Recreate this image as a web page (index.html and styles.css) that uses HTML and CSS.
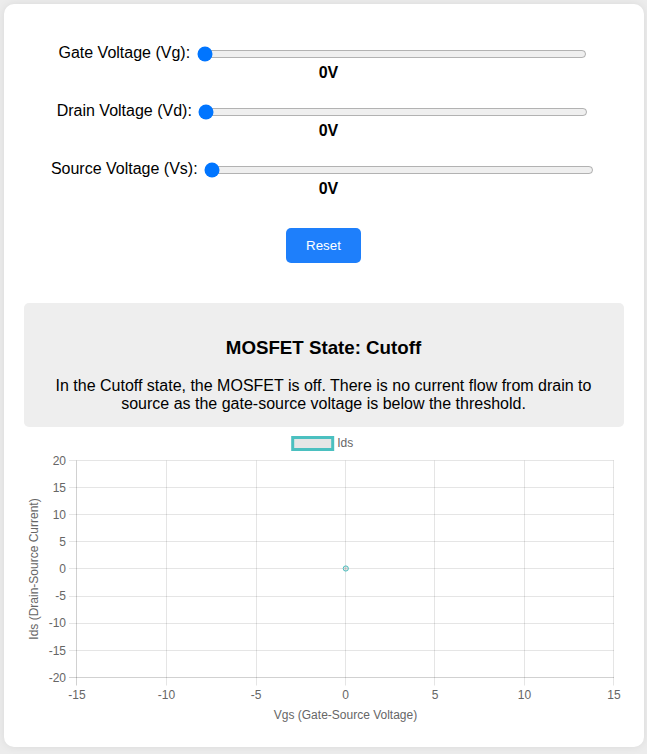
FILE: index.html
```html
<!DOCTYPE html>
<html lang="en">
<head>
<meta charset="UTF-8">
<title>MOSFET Simulator</title>
<link rel="stylesheet" href="styles.css">
</head>
<body>
<div class="container">
  <div class="control">
    <label for="vg">Gate Voltage (Vg):</label>
    <input type="range" id="vg" min="0" max="10" step="0.1" value="0">
    <div class="value">0V</div>
  </div>
  <div class="control">
    <label for="vd">Drain Voltage (Vd):</label>
    <input type="range" id="vd" min="0" max="10" step="0.1" value="0">
    <div class="value">0V</div>
  </div>
  <div class="control">
    <label for="vs">Source Voltage (Vs):</label>
    <input type="range" id="vs" min="0" max="10" step="0.1" value="0">
    <div class="value">0V</div>
  </div>
  <div class="actions"><button class="reset" type="button">Reset</button></div>
  <div class="info">
    <h3>MOSFET State: Cutoff</h3>
    <p>In the Cutoff state, the MOSFET is off. There is no current flow from drain to source as the gate-source voltage is below the threshold.</p>
  </div>
  <div class="chart">
    <svg class="chart-svg" width="600" height="300" viewBox="0 0 600 300" xmlns="http://www.w3.org/2000/svg">
      <g class="legend">
        <rect class="legend-box" x="268.7" y="10.5" width="40" height="12"></rect>
        <text class="tick" x="313.2" y="19.7">Ids</text>
      </g>
      <g class="grid">
        <line x1="45" y1="33.5" x2="590" y2="33.5"></line>
        <line x1="45" y1="60.5" x2="590" y2="60.5"></line>
        <line x1="45" y1="87.5" x2="590" y2="87.5"></line>
        <line x1="45" y1="114.5" x2="590" y2="114.5"></line>
        <line x1="45" y1="141.5" x2="590" y2="141.5"></line>
        <line x1="45" y1="169.5" x2="590" y2="169.5"></line>
        <line x1="45" y1="196.5" x2="590" y2="196.5"></line>
        <line x1="45" y1="223.5" x2="590" y2="223.5"></line>
        <line x1="142.5" y1="33.5" x2="142.5" y2="258.5"></line>
        <line x1="232.5" y1="33.5" x2="232.5" y2="258.5"></line>
        <line x1="321.5" y1="33.5" x2="321.5" y2="258.5"></line>
        <line x1="410.5" y1="33.5" x2="410.5" y2="258.5"></line>
        <line x1="500.5" y1="33.5" x2="500.5" y2="258.5"></line>
        <line x1="589.5" y1="33.5" x2="589.5" y2="258.5"></line>
      </g>
      <g class="axis">
        <line x1="52.5" y1="33.5" x2="52.5" y2="258.5"></line>
        <line x1="45" y1="250.5" x2="590" y2="250.5"></line>
      </g>
      <g class="yticks">
        <text class="tick" x="42" y="37.7">20</text>
        <text class="tick" x="42" y="64.8">15</text>
        <text class="tick" x="42" y="91.9">10</text>
        <text class="tick" x="42" y="119">5</text>
        <text class="tick" x="42" y="146.2">0</text>
        <text class="tick" x="42" y="173.3">-5</text>
        <text class="tick" x="42" y="200.4">-10</text>
        <text class="tick" x="42" y="227.5">-15</text>
        <text class="tick" x="42" y="254.7">-20</text>
      </g>
      <g class="xticks">
        <text class="tick" x="53" y="272">-15</text>
        <text class="tick" x="142.5" y="272">-10</text>
        <text class="tick" x="232" y="272">-5</text>
        <text class="tick" x="321.5" y="272">0</text>
        <text class="tick" x="411" y="272">5</text>
        <text class="tick" x="500.5" y="272">10</text>
        <text class="tick" x="590" y="272">15</text>
      </g>
      <text class="axis-title" x="321.5" y="292.3">Vgs (Gate-Source Voltage)</text>
      <text class="axis-title" transform="translate(14.2 142) rotate(-90)" x="0" y="0">Ids (Drain-Source Current)</text>
      <circle class="point" cx="321.8" cy="141.5" r="2.6"></circle>
    </svg>
  </div>
</div>
</body>
</html>
```
FILE: styles.css
```css
html, body {
  margin: 0;
}

body {
  background: #ececec;
  font-family: "Liberation Sans", Arial, sans-serif;
  color: #000;
  padding: 4px 0 7px;
}

.container {
  width: 600px;
  margin: 0 auto;
  padding: 20px;
  background: #fff;
  border-radius: 10px;
  box-shadow: 0 0 8px rgba(0, 0, 0, 0.08);
}

.control {
  margin: 20px 0;
  text-align: center;
  font-size: 16px;
}

.control input[type="range"] {
  width: 390px;
  margin: 2px;
  vertical-align: middle;
}

.value {
  font-weight: bold;
  margin-left: 10px;
}

.actions {
  text-align: center;
  margin-top: 30px;
}

.reset {
  font-family: "Liberation Sans", Arial, sans-serif;
  font-size: 13.333px;
  padding: 10px 20px;
  border: none;
  border-radius: 5px;
  background: #1e7ffb;
  color: #fff;
  cursor: pointer;
}

.info {
  margin-top: 40px;
  background: #eeeeee;
  padding: 15px 15px 14px;
  border-radius: 5px;
  text-align: center;
}

.info h3 {
  font-size: 18.72px;
  margin: 18.72px 0;
}

.info p {
  font-size: 16px;
  margin: 0;
}

.chart-svg {
  display: block;
}

.grid line {
  stroke: rgba(0, 0, 0, 0.1);
  stroke-width: 1;
}

.axis line {
  stroke: rgba(0, 0, 0, 0.18);
  stroke-width: 1;
}

.tick,
.axis-title {
  font-family: "Liberation Sans", Arial, sans-serif;
  font-size: 12px;
  fill: #666;
}

.yticks .tick {
  text-anchor: end;
}

.xticks .tick,
.axis-title {
  text-anchor: middle;
}

.legend-box {
  fill: #e6e6e6;
  stroke: rgb(75, 192, 192);
  stroke-width: 3;
}

.point {
  fill: rgba(0, 0, 0, 0.1);
  stroke: rgb(75, 192, 192);
  stroke-width: 1;
}
```
